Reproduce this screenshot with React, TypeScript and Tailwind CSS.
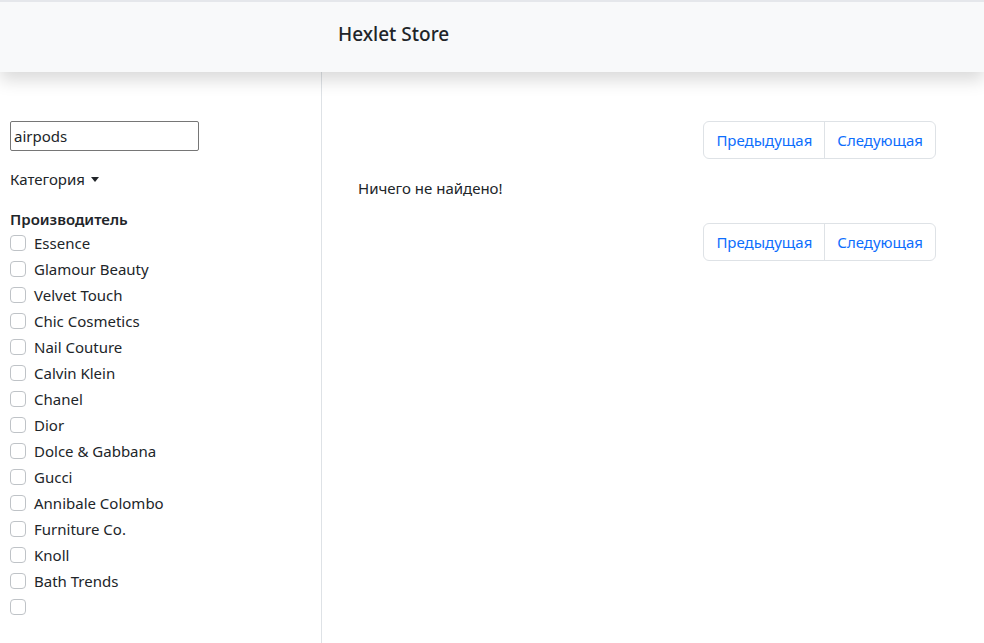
import React from 'react';

const brands = [
  'Essence',
  'Glamour Beauty',
  'Velvet Touch',
  'Chic Cosmetics',
  'Nail Couture',
  'Calvin Klein',
  'Chanel',
  'Dior',
  'Dolce & Gabbana',
  'Gucci',
  'Annibale Colombo',
  'Furniture Co.',
  'Knoll',
  'Bath Trends',
  '',
];

const Pager: React.FC = () => (
  <div className="flex justify-end">
    <div className="flex rounded-[6px] border border-[#dee2e6] text-[#0d6efd]">
      <button className="h-[36px] px-[12px] leading-6">Предыдущая</button>
      <button className="h-[36px] px-[12px] leading-6 border-l border-[#dee2e6]">Следующая</button>
    </div>
  </div>
);

const App: React.FC = () => {
  return (
    <div className="min-h-[643px] flex flex-col bg-white text-[#212529] text-[15px] leading-6" style={{ fontFamily: '"Noto Sans", "Open Sans", sans-serif' }}>
      {/* Header */}
      <header className="relative z-10 h-[72px] border-t-2 border-[#e5e7eb] bg-[#f8f9fa] shadow-[0_8px_16px_rgba(0,0,0,0.15)] flex items-center pl-[338px] pb-[6px]">
        <span className="text-[19px] font-medium leading-[30px]">Hexlet Store</span>
      </header>

      <div className="flex flex-1">
        {/* Sidebar */}
        <aside className="w-[322px] shrink-0 border-r border-[#dee2e6] pt-[49px] pl-[10px]">
          <input
            type="text"
            defaultValue="airpods"
            className="w-[189px] h-[30px] rounded-[2px] border border-[#767676] px-[3px] text-[15px] outline-none"
          />
          <div className="mt-[16px] flex items-center gap-[6px]">
            <span>Категория</span>
            <span className="w-0 h-0 border-x-[4px] border-x-transparent border-t-[5px] border-t-[#212529]" />
          </div>
          <div className="mt-[16px] font-semibold">Производитель</div>
          <ul className="-mt-[1px]">
            {brands.map((b, i) => (
              <li key={i} className="flex items-center h-[26px]">
                <span className="w-[16px] h-[16px] rounded-[4px] border border-[#bfc3c7] bg-white" />
                <span className="ml-[8px]">{b}</span>
              </li>
            ))}
          </ul>
        </aside>

        {/* Main */}
        <main className="flex-1 pt-[49px] pl-[36px] pr-[48px]">
          <Pager />
          <p className="mt-[17px] mb-[23px]">Ничего не найдено!</p>
          <Pager />
        </main>
      </div>
    </div>
  );
};

export default App;
